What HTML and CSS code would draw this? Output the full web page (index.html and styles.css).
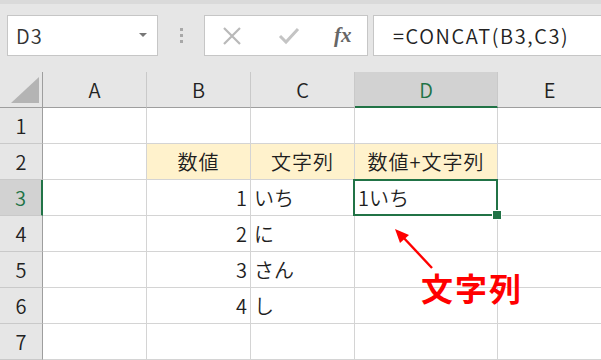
FILE: index.html
```html
<!DOCTYPE html>
<html lang="ja">
<head>
  <meta charset="UTF-8">
  <title>CONCAT</title>
  <link rel="stylesheet" href="styles.css">
</head>
<body>
  <div class="toolbar">
    <div class="name-box">
      <span>D3</span>
      <span class="drop"></span>
    </div>
    <div class="grip"><i></i><i></i><i></i></div>
    <div class="fx-buttons">
      <svg class="ico" width="20" height="20" viewBox="0 0 20 20"><path d="M2 2 L18 18 M18 2 L2 18" stroke="#b9b9b9" stroke-width="2.2" fill="none"/></svg>
      <svg class="ico" width="22" height="20" viewBox="0 0 22 20"><path d="M2 10 L8 16 L20 3" stroke="#c4c4c4" stroke-width="3" fill="none"/></svg>
      <span class="fx">fx</span>
    </div>
    <div class="formula">=CONCAT(B3,C3)</div>
  </div>

  <div class="sheet">
    <div class="corner"><span class="tri"></span></div>
    <div class="colhead">A</div>
    <div class="colhead">B</div>
    <div class="colhead">C</div>
    <div class="colhead active">D</div>
    <div class="colhead">E</div>

    <div class="rowhead">1</div>
    <div class="cell"></div><div class="cell"></div><div class="cell"></div><div class="cell"></div><div class="cell"></div>

    <div class="rowhead">2</div>
    <div class="cell"></div>
    <div class="cell fill center">数値</div>
    <div class="cell fill center">文字列</div>
    <div class="cell fill center">数値+文字列</div>
    <div class="cell"></div>

    <div class="rowhead active">3</div>
    <div class="cell"></div>
    <div class="cell num">1</div>
    <div class="cell">いち</div>
    <div class="cell selected">1いち</div>
    <div class="cell"></div>

    <div class="rowhead">4</div>
    <div class="cell"></div>
    <div class="cell num">2</div>
    <div class="cell">に</div>
    <div class="cell"></div>
    <div class="cell"></div>

    <div class="rowhead">5</div>
    <div class="cell"></div>
    <div class="cell num">3</div>
    <div class="cell">さん</div>
    <div class="cell"></div>
    <div class="cell"></div>

    <div class="rowhead">6</div>
    <div class="cell"></div>
    <div class="cell num">4</div>
    <div class="cell">し</div>
    <div class="cell"></div>
    <div class="cell"></div>

    <div class="rowhead">7</div>
    <div class="cell"></div><div class="cell"></div><div class="cell"></div><div class="cell"></div><div class="cell"></div>

    <svg class="arrow" width="50" height="45" viewBox="0 0 50 45">
      <path d="M40 40 L10 8" stroke="#ff0000" stroke-width="2.4" fill="none"/>
      <path d="M3 1 L17 7 L8 15 Z" fill="#ff0000"/>
    </svg>
    <div class="note">文字列</div>
  </div>
</body>
</html>
```

FILE: styles.css
```css
* {
  box-sizing: border-box;
}

body {
  margin: 0;
  width: 601px;
  height: 360px;
  overflow: hidden;
  background: #e6e6e6;
  font-family: "Noto Sans CJK JP", "Noto Sans", sans-serif;
  font-weight: 350;
  color: #1e1e1e;
}

.toolbar {
  height: 72px;
  border-top: 4px solid #dadada;
  padding: 11px 0 0 7px;
  display: flex;
  align-items: flex-start;
}

.name-box {
  width: 151px;
  height: 41px;
  background: #fff;
  border: 1px solid #c6c6c6;
  display: flex;
  align-items: center;
  justify-content: space-between;
  padding: 0 10px 0 8px;
  font-size: 20px;
  letter-spacing: 1px;
  color: #333;
}

.drop {
  width: 0;
  height: 0;
  border-left: 4px solid transparent;
  border-right: 4px solid transparent;
  border-top: 4px solid #777;
  margin-top: -2px;
}

.grip {
  width: 46px;
  height: 41px;
  display: flex;
  flex-direction: column;
  align-items: center;
  justify-content: center;
  gap: 3px;
}

.grip i {
  width: 3px;
  height: 3px;
  background: #a8a8a8;
}

.fx-buttons {
  width: 164px;
  height: 41px;
  background: #fff;
  border: 1px solid #c6c6c6;
  display: flex;
  align-items: center;
  padding-left: 17px;
}

.fx-buttons .ico {
  margin-right: 36px;
}

.fx-buttons .ico + .ico {
  margin-right: 34px;
}

.fx {
  font-family: "Liberation Serif", serif;
  font-style: italic;
  font-weight: bold;
  font-size: 21px;
  color: #666;
}

.formula {
  flex: 1;
  margin-left: 5px;
  height: 41px;
  background: #fff;
  border: 1px solid #c6c6c6;
  border-right: none;
  padding-left: 19px;
  font-size: 20px;
  letter-spacing: 1.6px;
  line-height: 39px;
  color: #222;
}

.sheet {
  position: relative;
  display: grid;
  grid-template-columns: 43px 104px 104px 104px 143px 104px;
  grid-auto-rows: 36px;
  background: #fff;
}

.corner {
  background: #e6e6e6;
  border-right: 1px solid #9e9e9e;
  border-bottom: 1px solid #9e9e9e;
  position: relative;
}

.tri {
  position: absolute;
  right: 3px;
  bottom: 4px;
  width: 0;
  height: 0;
  border-left: 28px solid transparent;
  border-bottom: 26px solid #b4b4b4;
}

.colhead {
  background: #e6e6e6;
  border-right: 1px solid #c9c9c9;
  border-bottom: 1px solid #9e9e9e;
  display: flex;
  align-items: center;
  justify-content: center;
  font-size: 20px;
  color: #222;
}

.colhead.active {
  background: #d2d2d2;
  border-bottom: 2px solid #217346;
  color: #217346;
}

.rowhead {
  background: #e6e6e6;
  border-right: 1px solid #9e9e9e;
  border-bottom: 1px solid #c9c9c9;
  display: flex;
  align-items: center;
  justify-content: center;
  font-size: 20px;
  color: #222;
}

.rowhead.active {
  background: #d2d2d2;
  border-right: 2px solid #217346;
  color: #217346;
}

.cell {
  border-right: 1px solid #d4d4d4;
  border-bottom: 1px solid #d4d4d4;
  display: flex;
  align-items: center;
  padding: 0 3px;
  font-size: 20px;
  white-space: nowrap;
  color: #1e1e1e;
}

.cell.fill {
  background: #fff2cc;
  letter-spacing: 1px;
}

.cell.center {
  justify-content: center;
}

.cell.num {
  justify-content: flex-end;
}

.cell.selected {
  position: relative;
}

.cell.selected::before {
  content: "";
  position: absolute;
  left: -2px;
  top: -1px;
  right: -1px;
  bottom: -1px;
  border: 2px solid #217346;
}

.cell.selected::after {
  content: "";
  position: absolute;
  right: -5px;
  bottom: -5px;
  width: 8px;
  height: 8px;
  background: #217346;
  border: 1px solid #fff;
}

.arrow {
  position: absolute;
  left: 392px;
  top: 156px;
}

.note {
  position: absolute;
  left: 421px;
  top: 192px;
  font-size: 32px;
  font-weight: bold;
  color: #ff0000;
  letter-spacing: 2px;
}
```
